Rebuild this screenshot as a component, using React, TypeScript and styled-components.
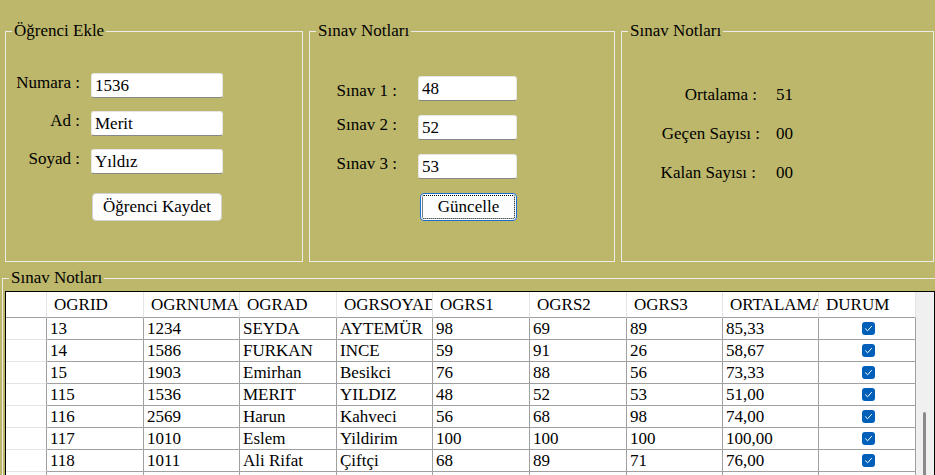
import React from "react";
import styled, { createGlobalStyle } from "styled-components";

const GlobalStyle = createGlobalStyle`
  html, body {
    margin: 0;
    padding: 0;
    background: #bdb76b;
    overflow: hidden;
  }
  body {
    font-family: "Liberation Serif", "DejaVu Serif", serif;
    font-size: 17px;
    color: #000;
  }
  * { box-sizing: border-box; }
`;

const Page = styled.div`
  width: 935px;
  height: 475px;
  overflow: hidden;
  display: flex;
  flex-direction: column;
  padding-top: 21px;
`;

const TopRow = styled.div`
  display: flex;
  gap: 6px;
  margin-left: 5px;
`;

const Group = styled.fieldset<{ $w: number; $pt: number }>`
  margin: 0;
  width: ${(p) => p.$w}px;
  height: 241px;
  padding: ${(p) => p.$pt}px 0 0 0;
  border: 1px solid #ecece6;
  min-width: 0;
`;

const Legend = styled.legend`
  margin-left: 6px;
  padding: 0 2px;
  line-height: 20px;
  font-size: 17px;
`;

const FormGrid = styled.div<{ $label: number; $gap: number; $input: number; $row: number }>`
  display: grid;
  grid-template-columns: ${(p) => p.$label}px ${(p) => p.$input}px;
  column-gap: ${(p) => p.$gap}px;
  row-gap: ${(p) => p.$row}px;
  align-items: start;
`;

const Label = styled.label<{ $dy?: number }>`
  text-align: right;
  line-height: 20px;
  white-space: nowrap;
  padding-top: ${(p) => p.$dy ?? 0}px;
`;

const TextBox = styled.input`
  width: 100%;
  height: 25px;
  margin: 0;
  border: 1px solid #e6e6e6;
  border-bottom-color: #878787;
  border-radius: 3px;
  background: #fff;
  padding: 0 3px;
  font-family: inherit;
  font-size: 17px;
  color: #000;
  outline: none;
`;

const Button = styled.button<{ $w: number; $focused?: boolean; $mt: number; $ml: number }>`
  grid-column: 2;
  width: ${(p) => p.$w}px;
  height: 28px;
  margin-top: ${(p) => p.$mt}px;
  margin-left: ${(p) => p.$ml}px;
  padding: 0;
  font-family: inherit;
  font-size: 17px;
  color: #000;
  background: #fdfdfd;
  border: 1px solid ${(p) => (p.$focused ? "#1a6fd0" : "#d3d3d3")};
  border-radius: 4px;
  outline: ${(p) => (p.$focused ? "1px dotted #000" : "none")};
  outline-offset: -3px;
`;

const StatGrid = styled.div`
  display: grid;
  grid-template-columns: 136px auto;
  column-gap: 18px;
  row-gap: 19px;
  line-height: 20px;
`;

const StatLabel = styled.span<{ $dx?: number }>`
  text-align: right;
  white-space: nowrap;
  margin-right: ${(p) => p.$dx ?? 0}px;
`;

const StatValue = styled.span``;

const BottomGroup = styled.fieldset`
  margin: 6px 0 0 2px;
  width: 945px;
  padding: 3px 0 0 2px;
  border: 1px solid #ecece6;
  min-width: 0;
  flex: 1;
`;

const BottomLegend = styled.legend`
  margin-left: 4px;
  padding: 0 2px;
  line-height: 20px;
`;

const GridBox = styled.div`
  width: 930px;
  border: 1px solid #000;
  display: flex;
  background: #fff;
`;

const Table = styled.div`
  width: 910px;
  display: flex;
  flex-direction: column;
`;

const COLS = "41px 97px 96px 97px 96px 97px 97px 96px 96px 97px";

const Row = styled.div<{ $head?: boolean }>`
  display: grid;
  grid-template-columns: ${COLS};
  height: ${(p) => (p.$head ? 26 : 22)}px;
`;

const HeadCell = styled.div`
  border-right: 1px solid #e4e4e4;
  border-bottom: 1px solid #a0a0a0;
  padding: 2px 0 0 7px;
  line-height: 22px;
  white-space: nowrap;
  overflow: hidden;
`;

const RowHead = styled.div`
  border-right: 1px solid #a0a0a0;
  border-bottom: 1px solid #e4e4e4;
`;

const Cell = styled.div<{ $center?: boolean }>`
  border-right: 1px solid #a0a0a0;
  border-bottom: 1px solid #a0a0a0;
  padding: 1px 0 0 3px;
  line-height: 20px;
  white-space: nowrap;
  overflow: hidden;
  display: flex;
  align-items: center;
  justify-content: ${(p) => (p.$center ? "center" : "flex-start")};
`;

const CheckBox = styled.span`
  width: 13px;
  height: 13px;
  border-radius: 3px;
  background: #005fb8;
  display: inline-flex;
  align-items: center;
  justify-content: center;
  margin-top: -1px;
`;

const ScrollTrack = styled.div`
  width: 18px;
  background: #f0f0f0;
  display: flex;
  flex-direction: column;
  padding: 120px 0 0 7px;
`;

const ScrollThumb = styled.div`
  width: 3px;
  flex: 1;
  border-radius: 2px;
  background: #8a8a8a;
`;

const headers = [
  "OGRID",
  "OGRNUMARA",
  "OGRAD",
  "OGRSOYAD",
  "OGRS1",
  "OGRS2",
  "OGRS3",
  "ORTALAMA",
  "DURUM",
];

const rows: string[][] = [
  ["13", "1234", "SEYDA", "AYTEMÜR", "98", "69", "89", "85,33"],
  ["14", "1586", "FURKAN", "INCE", "59", "91", "26", "58,67"],
  ["15", "1903", "Emirhan", "Besikci", "76", "88", "56", "73,33"],
  ["115", "1536", "MERIT", "YILDIZ", "48", "52", "53", "51,00"],
  ["116", "2569", "Harun", "Kahveci", "56", "68", "98", "74,00"],
  ["117", "1010", "Eslem", "Yildirim", "100", "100", "100", "100,00"],
  ["118", "1011", "Ali Rifat", "Çiftçi", "68", "89", "71", "76,00"],
  ["", "", "", "", "", "", "", ""],
];

const Check = () => (
  <CheckBox>
    <svg width="9" height="9" viewBox="0 0 9 9">
      <polyline
        points="1.5,4.8 3.6,6.8 7.5,2.4"
        fill="none"
        stroke="#fff"
        strokeWidth="1"
        strokeLinecap="round"
        strokeLinejoin="round"
      />
    </svg>
  </CheckBox>
);

export default function App() {
  return (
    <>
      <GlobalStyle />
      <Page>
        <TopRow>
          <Group $w={298} $pt={32}>
            <Legend>Öğrenci Ekle</Legend>
            <FormGrid $label={74} $gap={11} $input={132} $row={13}>
              <Label>Numara :</Label>
              <TextBox defaultValue="1536" />
              <Label>Ad :</Label>
              <TextBox defaultValue="Merit" />
              <Label>Soyad :</Label>
              <TextBox defaultValue="Yıldız" />
              <Button $w={130} $mt={6} $ml={1}>
                Öğrenci Kaydet
              </Button>
            </FormGrid>
          </Group>
          <Group $w={306} $pt={35}>
            <Legend>Sınav Notları</Legend>
            <FormGrid $label={87} $gap={21} $input={99} $row={14}>
              <Label $dy={5}>Sınav 1 :</Label>
              <TextBox defaultValue="48" />
              <Label>Sınav 2 :</Label>
              <TextBox defaultValue="52" />
              <Label>Sınav 3 :</Label>
              <TextBox defaultValue="53" />
              <Button $w={97} $mt={0} $ml={2} $focused>
                Güncelle
              </Button>
            </FormGrid>
          </Group>
          <Group $w={313} $pt={44}>
            <Legend>Sınav Notları</Legend>
            <StatGrid>
              <StatLabel $dx={1}>Ortalama :</StatLabel>
              <StatValue>51</StatValue>
              <StatLabel $dx={-2}>Geçen Sayısı :</StatLabel>
              <StatValue>00</StatValue>
              <StatLabel $dx={2}>Kalan Sayısı :</StatLabel>
              <StatValue>00</StatValue>
            </StatGrid>
          </Group>
        </TopRow>
        <BottomGroup>
          <BottomLegend>Sınav Notları</BottomLegend>
          <GridBox>
            <Table>
              <Row $head>
                <HeadCell />
                {headers.map((h) => (
                  <HeadCell key={h}>{h}</HeadCell>
                ))}
              </Row>
              {rows.map((r, i) => (
                <Row key={i}>
                  <RowHead />
                  {r.map((c, j) => (
                    <Cell key={j}>{c}</Cell>
                  ))}
                  <Cell $center>{r[0] ? <Check /> : null}</Cell>
                </Row>
              ))}
            </Table>
            <ScrollTrack>
              <ScrollThumb />
            </ScrollTrack>
          </GridBox>
        </BottomGroup>
      </Page>
    </>
  );
}
